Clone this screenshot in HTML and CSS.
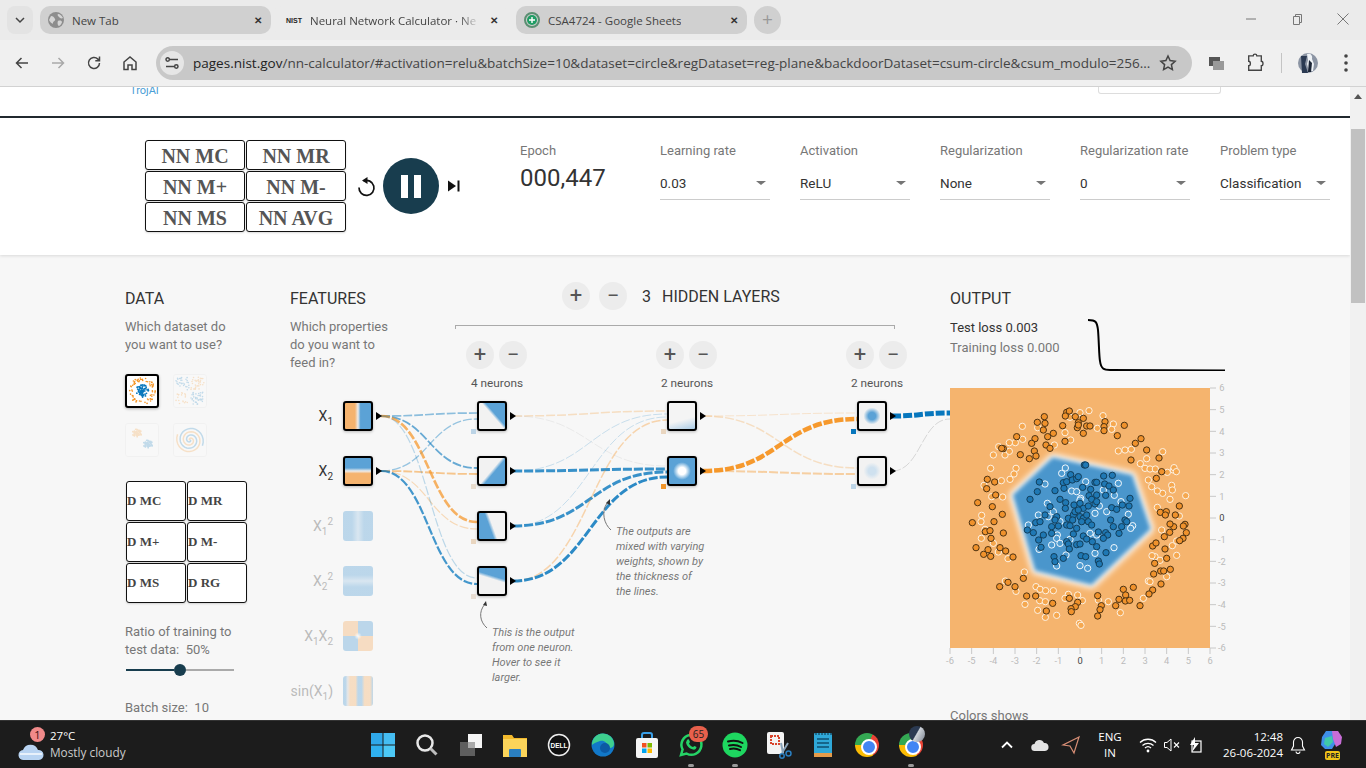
FILE: index.html
```html
<!DOCTYPE html>
<html lang="en">
<head>
    <meta charset="UTF-8">
    <title>Neural Network Calculator</title>
    <link rel="stylesheet" href="styles.css">
</head>
<body>
    <div class="tabstrip">
        <div class="tab-menu"><svg width="12" height="12" viewBox="0 0 12 12"><path class="ic-dark" d="M2 4l4 4 4-4"/></svg></div>
        <div class="tab">
            <svg width="16" height="16" viewBox="0 0 16 16"><circle cx="8" cy="8" r="8" fill="#8d8d8d"/><path d="M3 4c2 0 3 1 4 3s-2 2-2 4-3-1-4-3zM10 2c2 0 4 2 5 4-2 1-3 0-4-1s-2-2-1-3zM10 9c2-1 4 0 4 1s-2 4-3 4-2-3-1-5z" fill="#d4d4d4"/></svg>
            <span class="tab-title">New Tab</span>
            <span class="tab-close">✕</span>
        </div>
        <div class="tab tab-active">
            <span class="nist-icon">NIST</span>
            <span class="tab-title tab-fade">Neural Network Calculator · Ne</span>
            <span class="tab-close">✕</span>
        </div>
        <div class="tab tab-sheets">
            <svg width="16" height="16" viewBox="0 0 16 16"><circle cx="8" cy="8" r="7" fill="none" stroke="#5b8f72" stroke-width="2"/><circle cx="8" cy="8" r="5" fill="#1f9d64"/><path d="M8 5v6M5 8h6" stroke="#fff" stroke-width="1.4"/></svg>
            <span class="tab-title">CSA4724 - Google Sheets</span>
            <span class="tab-close">✕</span>
        </div>
        <div class="tab-new">+</div>
        <div class="window-btns">
            <svg width="14" height="14" viewBox="0 0 14 14"><path class="ic-thin" d="M2 7h10"/></svg>
            <svg width="14" height="14" viewBox="0 0 14 14"><path class="ic-thin" d="M3.500 4.500h6v8h-6zM5.500 4.500v-2h6v8h-2"/></svg>
            <svg width="14" height="14" viewBox="0 0 14 14"><path class="ic-thin" d="M1.500 1.500l11 11M12.500 1.500l-11 11"/></svg>
        </div>
    </div>

    <div class="toolbar">
        <div class="nav-btn"><svg width="16" height="16" viewBox="0 0 16 16"><path class="ic-dark" d="M14 8H2.500M7.500 3L2.500 8l5 5"/></svg></div>
        <div class="nav-btn"><svg width="16" height="16" viewBox="0 0 16 16"><path class="ic-off" d="M2 8h11.500M8.500 3l5 5-5 5"/></svg></div>
        <div class="nav-btn"><svg width="16" height="16" viewBox="0 0 16 16"><path class="ic-dark" d="M13.500 8a5.500 5.500 0 1 1-1.600-3.900L13.500 5.700M13.500 1.500v4.200H9.300"/></svg></div>
        <div class="nav-btn"><svg width="16" height="16" viewBox="0 0 16 16"><path class="ic-dark" d="M2 7l6-5 6 5v7.500H10V10H6v4.500H2z"/></svg></div>
        <div class="omnibox">
            <div class="site-icon"><svg width="14" height="14" viewBox="0 0 14 14"><path class="ic-dark" d="M5 3.500h8M1 10.500h8"/><circle class="ic-dark" cx="2.700" cy="3.500" r="1.700"/><circle class="ic-dark" cx="11.300" cy="10.500" r="1.700"/></svg></div>
            <span class="url"><span class="url-host">pages.nist.gov</span>/nn-calculator/#activation=relu&amp;batchSize=10&amp;dataset=circle&amp;regDataset=reg-plane&amp;backdoorDataset=csum-circle&amp;csum_modulo=256...</span>
            <svg class="star" width="18" height="18" viewBox="0 0 18 18"><path class="ic-dark" d="M9 2l2.100 4.600 5 .6-3.700 3.400 1 5L9 13.100l-4.400 2.500 1-5L1.900 7.200l5-.6z"/></svg>
        </div>
        <div class="tool-icons">
            <svg width="24" height="24" viewBox="0 0 24 24"><rect x="4" y="6" width="11" height="9" fill="#555"/><rect x="8" y="10" width="11" height="9" fill="#999"/></svg>
            <svg width="24" height="24" viewBox="0 0 24 24"><path class="ic-dark" d="M5 4h5c0-2.500 4-2.500 4 0h5v6c2.500 0 2.500 5 0 5v5H5v-5c2.500 0 2.500-5 0-5z" transform="translate(1.200 1.200) scale(.9)"/></svg>
            <span class="tool-divider"></span>
            <svg width="24" height="24" viewBox="0 0 24 24"><circle cx="12" cy="12" r="10" fill="#8b94a3"/><path d="M5 5h6l-2 8 3 9H6z" fill="#2b3a52"/><path d="M11 3c3-1 6 1 5 5l2 5-1 7h-4l-2-7 1-4z" fill="#eef2f6"/><path d="M13 9l3 3-1 9h-3z" fill="#1a2435"/></svg>
            <svg width="24" height="24" viewBox="0 0 24 24"><circle cx="12" cy="5" r="1.800" fill="#444"/><circle cx="12" cy="12" r="1.800" fill="#444"/><circle cx="12" cy="19" r="1.800" fill="#444"/></svg>
        </div>
    </div>

    <div class="viewport">
        <div class="page">
            <div class="site-header">
                <span class="trojai">TrojAI</span>
                <span class="search-box"></span>
            </div>

            <div class="topbar">
                <div class="nn-grid">
                    <button class="nn-btn">NN MC</button>
                    <button class="nn-btn">NN MR</button>
                    <button class="nn-btn">NN M+</button>
                    <button class="nn-btn">NN M-</button>
                    <button class="nn-btn">NN MS</button>
                    <button class="nn-btn">NN AVG</button>
                </div>
                <div class="player">
                    <svg width="24" height="24" viewBox="0 0 24 24"><path class="ic-reset" d="M8.500 7a7.500 7.500 0 1 1-4.500 6.500"/><path d="M12.500 3v7l-5.500-3.500z" fill="#111"/></svg>
                    <div class="play-btn"><span></span><span></span></div>
                    <svg width="18" height="18" viewBox="0 0 18 18"><path d="M3 3.500l8 5.500-8 5.500z" fill="#111"/><rect x="12.500" y="3.500" width="2" height="11" fill="#111"/></svg>
                </div>
                <div class="fields">
                    <div class="field">
                        <label>Epoch</label>
                        <div class="epoch">000,447</div>
                    </div>
                    <div class="field">
                        <label>Learning rate</label>
                        <div class="select">0.03</div>
                    </div>
                    <div class="field">
                        <label>Activation</label>
                        <div class="select">ReLU</div>
                    </div>
                    <div class="field">
                        <label>Regularization</label>
                        <div class="select">None</div>
                    </div>
                    <div class="field">
                        <label>Regularization rate</label>
                        <div class="select">0</div>
                    </div>
                    <div class="field">
                        <label>Problem type</label>
                        <div class="select">Classification</div>
                    </div>
                </div>
            </div>

            <div class="board">
                <svg id="links" class="links" viewBox="0 255 1350 465"></svg>

                <div class="col-data">
                    <h4>DATA</h4>
                    <p class="hint">Which dataset do<br>you want to use?</p>
                    <div class="datasets">
                        <div class="thumb thumb-on"><svg id="ds-circle" width="30" height="30" viewBox="0 0 30 30"></svg></div>
                        <div class="thumb thumb-off"><svg id="ds-xor" width="32" height="32" viewBox="0 0 32 32"></svg></div>
                        <div class="thumb thumb-off"><svg id="ds-gauss" width="32" height="32" viewBox="0 0 32 32"></svg></div>
                        <div class="thumb thumb-off"><svg id="ds-spiral" width="32" height="32" viewBox="0 0 32 32"></svg></div>
                    </div>
                    <div class="d-grid">
                        <button class="d-btn">D MC</button>
                        <button class="d-btn">D MR</button>
                        <button class="d-btn">D M+</button>
                        <button class="d-btn">D M-</button>
                        <button class="d-btn">D MS</button>
                        <button class="d-btn">D RG</button>
                    </div>
                    <p class="hint ratio">Ratio of training to<br>test data:&nbsp; 50%</p>
                    <div class="slider"><span class="slider-fill"></span><span class="slider-thumb"></span><span class="slider-rest"></span></div>
                    <p class="hint batch">Batch size:&nbsp; 10</p>
                </div>

                <div class="col-features">
                    <h4>FEATURES</h4>
                    <p class="hint">Which properties<br>do you want to<br>feed in?</p>
                    <div class="feature-list">
                        <div class="feature"><span class="f-label">X<sub>1</sub></span><div class="node node-out f-x1"></div></div>
                        <div class="feature"><span class="f-label">X<sub>2</sub></span><div class="node node-out f-x2"></div></div>
                        <div class="feature f-off"><span class="f-label">X<sub>1</sub><sup>2</sup></span><div class="node-flat f-x1x1"></div></div>
                        <div class="feature f-off"><span class="f-label">X<sub>2</sub><sup>2</sup></span><div class="node-flat f-x2x2"></div></div>
                        <div class="feature f-off"><span class="f-label">X<sub>1</sub>X<sub>2</sub></span><div class="node-flat f-x1x2"></div></div>
                        <div class="feature f-off"><span class="f-label">sin(X<sub>1</sub>)</span><div class="node-flat f-sin"></div></div>
                    </div>
                </div>

                <div class="col-hidden">
                    <div class="hidden-head">
                        <span class="round-btn">+</span>
                        <span class="round-btn">−</span>
                        <span class="layer-count">3</span>
                        <span class="layer-title">HIDDEN LAYERS</span>
                    </div>
                    <div class="bracket"></div>
                    <div class="layers">
                        <div class="layer">
                            <div class="layer-head">
                                <div class="layer-btns"><span class="round-btn">+</span><span class="round-btn">−</span></div>
                                <div class="neuron-count">4 neurons</div>
                            </div>
                            <div class="node-list">
                                <div class="node node-out h-a"><i class="weight w-blue-soft"></i></div>
                                <div class="node node-out h-b"><i class="weight w-tan"></i></div>
                                <div class="node node-out h-c"><i class="weight w-tan2"></i></div>
                                <div class="node node-out h-d"><i class="weight w-tan3"></i></div>
                            </div>
                        </div>
                        <div class="layer">
                            <div class="layer-head">
                                <div class="layer-btns"><span class="round-btn">+</span><span class="round-btn">−</span></div>
                                <div class="neuron-count">2 neurons</div>
                            </div>
                            <div class="node-list">
                                <div class="node node-out m-a"><i class="weight w-tan2"></i></div>
                                <div class="node node-out m-b"><i class="weight w-orange"></i></div>
                            </div>
                        </div>
                        <div class="layer">
                            <div class="layer-head">
                                <div class="layer-btns"><span class="round-btn">+</span><span class="round-btn">−</span></div>
                                <div class="neuron-count">2 neurons</div>
                            </div>
                            <div class="node-list">
                                <div class="node node-out l-a"><i class="weight w-blue"></i></div>
                                <div class="node node-out l-b"><i class="weight w-blue-soft"></i></div>
                            </div>
                        </div>
                    </div>
                </div>

                <div class="col-output">
                    <h4>OUTPUT</h4>
                    <div class="loss-row">
                        <div class="loss-text">
                            <div class="loss-test">Test loss 0.003</div>
                            <div class="loss-train">Training loss 0.000</div>
                        </div>
                        <svg width="137" height="54" viewBox="0 0 137 54"><path class="loss-line" d="M0 3c8 0 9 2 10 10 1 12 1 26 2 31 1 8 4 9 10 9l115 .5"/></svg>
                    </div>
                    <svg id="plot" class="plot" width="290" height="290" viewBox="30 24 870 870">
                        <rect class="plot-bg" x="30" y="24" width="780" height="780"/>
                        <polygon class="plot-glow" points="338,232 577,285 632,447 455,615 285,572 218,345"/>
                        <polygon class="plot-blue" points="338,232 577,285 632,447 455,615 285,572 218,345"/>
                    </svg>
                    <p class="hint colors">Colors shows</p>
                </div>

                <div class="note note-a">The outputs are<br>mixed with varying<br>weights, shown by<br>the thickness of<br>the lines.</div>
                <div class="note note-b">This is the output<br>from one neuron.<br>Hover to see it<br>larger.</div>
            </div>
        </div>
        <div class="scrollbar">
            <span class="scroll-up"></span>
            <span class="scroll-thumb"></span>
        </div>
    </div>

    <div class="taskbar">
        <div class="weather">
            <div class="weather-icon">
                <span class="weather-badge">1</span>
                <svg width="26" height="20" viewBox="0 0 26 20"><path d="M6 19a5 5 0 0 1-1-10 8 8 0 0 1 15 0 5 5 0 0 1 1 10z" fill="#b9d4f2"/><path d="M2 13h22" stroke="#e8f1fb" stroke-width="2"/></svg>
            </div>
            <div class="weather-text">
                <div class="temp">27°C</div>
                <div class="cond">Mostly cloudy</div>
            </div>
        </div>
        <div class="apps">
            <div class="app"><svg width="24" height="24" viewBox="0 0 24 24"><rect width="11.500" height="11.500" fill="#2fa8ea"/><rect x="12.500" width="11.500" height="11.500" fill="#45bdf2"/><rect y="12.500" width="11.500" height="11.500" fill="#2fb0ee"/><rect x="12.500" y="12.500" width="11.500" height="11.500" fill="#4cc8f5"/></svg></div>
            <div class="app"><svg width="24" height="24" viewBox="0 0 24 24"><circle cx="10" cy="10" r="7.500" fill="none" stroke="#e8e8e8" stroke-width="2.500"/><path d="M15.500 15.500l6 6" stroke="#bdbdbd" stroke-width="3"/></svg></div>
            <div class="app"><svg width="24" height="24" viewBox="0 0 24 24"><rect x="9" y="1" width="14" height="14" fill="#f4f4f4"/><rect x="1" y="9" width="15" height="14" fill="#5e5e5e"/><rect x="9" y="9" width="7" height="6" fill="#a9a9a9"/></svg></div>
            <div class="app"><svg width="24" height="24" viewBox="0 0 24 24"><path d="M0 2h9l2 3h13v19H0z" fill="#f2b92c"/><rect y="6" width="24" height="18" fill="#fbd45a"/><rect x="6" y="16" width="12" height="8" rx="1" fill="#2a7fc1"/></svg></div>
            <div class="app"><svg width="24" height="24" viewBox="0 0 24 24"><circle cx="12" cy="12" r="10.500" fill="#111" stroke="#eee" stroke-width="1.500"/><text class="dell-text" x="12" y="14.500" text-anchor="middle">DELL</text></svg></div>
            <div class="app"><svg width="24" height="24" viewBox="0 0 24 24"><circle cx="12" cy="12" r="11.500" fill="#1278c8"/><path d="M1 12a11 11 0 0 1 22-1c0 4-5 5-7 3 1-4-3-7-7-6-4 1-7 3-8 4z" fill="#3ecf8e"/><circle cx="14" cy="15" r="5" fill="#0c59a4"/></svg></div>
            <div class="app"><svg width="24" height="26" viewBox="0 0 24 26"><path d="M7 6V3a2 2 0 0 1 2-2h6a2 2 0 0 1 2 2v3" fill="none" stroke="#3aa0e8" stroke-width="2"/><rect x="1" y="6" width="22" height="20" rx="2" fill="#f5f5f5"/><rect x="7" y="11" width="4.500" height="4.500" fill="#f25022"/><rect x="12.500" y="11" width="4.500" height="4.500" fill="#7fba00"/><rect x="7" y="16.500" width="4.500" height="4.500" fill="#00a4ef"/><rect x="12.500" y="16.500" width="4.500" height="4.500" fill="#ffb900"/></svg></div>
            <div class="app app-run">
                <svg width="26" height="26" viewBox="0 0 26 26"><path d="M3 23l1.600-5.500A10 10 0 1 1 8.500 21.500z" fill="none" stroke="#25d366" stroke-width="2.500"/><path d="M9 8c1-1 2-1 2.500 1l.5 1-1 1.500c1 2 2 3 4 3.500l1.500-1 2 1c0 2-2 3-3.500 2.500-4-1-6.500-4-7-7z" fill="#25d366"/></svg>
                <span class="app-badge">65</span>
            </div>
            <div class="app app-run"><svg width="26" height="26" viewBox="0 0 26 26"><circle cx="13" cy="13" r="12.500" fill="#1ed760"/><path class="spotify-line" d="M6 9.500c5-1.500 10-1 14.500 1.500M7 13.500c4-1 8.500-.5 12 1.500M8 17c3.500-.8 7-.4 10 1.200"/></svg></div>
            <div class="app"><svg width="26" height="28" viewBox="0 0 26 28"><rect x="1" y="1" width="17" height="22" rx="2" fill="#f3f3f3"/><rect x="5" y="5" width="8" height="8" fill="none" stroke="#d9442c" stroke-width="2" stroke-dasharray="2 1"/><path d="M15 12l2 10M22 12l-6 10" stroke="#8aa3b8" stroke-width="2"/><circle cx="22.500" cy="22.500" r="2.500" fill="none" stroke="#2a7fc1" stroke-width="1.500"/><circle cx="16" cy="25" r="2.200" fill="none" stroke="#2a7fc1" stroke-width="1.500"/></svg></div>
            <div class="app"><svg width="20" height="26" viewBox="0 0 20 26"><rect x="1" y="1" width="18" height="24" rx="1" fill="#2fa8d8"/><rect x="1" y="21" width="18" height="4" fill="#e49b4a"/><path d="M4 7h12M4 11h12M4 15h12" stroke="#0f4f70" stroke-width="1.500"/><path d="M3 1v2M6 1v2M9 1v2M12 1v2M15 1v2M18 1v2" stroke="#0b3045" stroke-width="1"/></svg></div>
            <div class="app"><span class="chrome-logo"></span></div>
            <div class="app app-run"><span class="chrome-logo"></span><span class="chrome-avatar"></span></div>
        </div>
        <div class="tray">
            <div class="tray-item tray-wide"><svg width="14" height="14" viewBox="0 0 14 14"><path d="M2 9.500l5-5 5 5" fill="none" stroke="#fff" stroke-width="1.800"/></svg></div>
            <div class="tray-item tray-cloud"><svg width="18" height="14" viewBox="0 0 18 14"><path d="M4 13a3.500 3.500 0 0 1-.5-7A5 5 0 0 1 13 5a4 4 0 0 1 1 8z" fill="#e4e4e4"/></svg></div>
            <div class="tray-item tray-arrow"><svg width="20" height="20" viewBox="0 0 20 20"><path d="M18 2L2 10l7 1 4 7z" fill="none" stroke="#d88f76" stroke-width="1.200"/></svg></div>
            <div class="lang">ENG<br>IN</div>
            <div class="tray-item tray-icon"><svg width="18" height="16" viewBox="0 0 18 16"><path d="M1 5.500a11.500 11.500 0 0 1 16 0M3.500 8.500a8 8 0 0 1 11 0M6 11a4.500 4.500 0 0 1 6 0" fill="none" stroke="#fff" stroke-width="1.300"/><circle cx="9" cy="14" r="1.400" fill="#fff"/></svg></div>
            <div class="tray-item tray-icon"><svg width="18" height="16" viewBox="0 0 18 16"><path d="M1.500 5.500h2.500L8 2v12l-4-3.500H1.500z" fill="none" stroke="#fff" stroke-width="1"/><path d="M11 5.500l5 5M16 5.500l-5 5" stroke="#fff" stroke-width="1.100"/></svg></div>
            <div class="tray-item tray-icon"><svg width="18" height="18" viewBox="0 0 18 18"><rect x="5" y="5" width="9" height="11" fill="none" stroke="#fff" stroke-width="1.200"/><path d="M8 1L3 9h4l-2 7 7-9H8z" fill="#fff"/></svg></div>
            <div class="clock">12:48<br>26-06-2024</div>
            <div class="tray-item tray-bell"><svg width="16" height="18" viewBox="0 0 16 18"><path d="M8 1.500a4.500 4.500 0 0 0-4.500 4.500v4L1.500 14h13l-2-4V6A4.500 4.500 0 0 0 8 1.500zM6 15.500a2 2 0 0 0 4 0" fill="none" stroke="#fff" stroke-width="1.100"/></svg></div>
            <div class="copilot">
                <svg width="24" height="20" viewBox="0 0 24 20"><path d="M6 1h8l2 2 1 8-5 8H5l-4-4 1-8z" fill="#3f8fe8"/><path d="M12 1h6l4 6-1 7-5 3-3-8z" fill="#c86dd7"/><path d="M5 8l7-2 1 6-5 5-4-3z" fill="#3fc9a8"/></svg>
                <span class="pre-badge">PRE</span>
            </div>
        </div>
    </div>

    <script src="plot.js"></script>
</body>
</html>
```

FILE: styles.css
```css
* {
    box-sizing: border-box;
}
html, body {
    margin: 0;
    height: 768px;
    overflow: hidden;
}
body {
    width: 1366px;
    display: flex;
    flex-direction: column;
    font-family: Roboto, "Liberation Sans", sans-serif;
    color: #333;
    background-color: #f7f7f7;
}
svg {
    display: block;
    flex: none;
}
.ic-dark, .ic-off, .ic-thin {
    fill: none;
    stroke: #444;
    stroke-width: 1.500;
}
.ic-off {
    stroke: #a9a9a9;
}
.ic-thin {
    stroke: #777;
    stroke-width: 1;
}

/* browser chrome */
.tabstrip {
    height: 40px;
    flex: none;
    display: flex;
    align-items: flex-start;
    padding: 6px 0 0 7px;
    background-color: #ebebeb;
    font-family: "Open Sans", "Liberation Sans", sans-serif;
    font-size: 11.500px;
    color: #444;
}
.tab-menu {
    width: 26px;
    height: 28px;
    margin-right: 7px;
    border-radius: 8px;
    background-color: #e3e3e3;
    display: flex;
    align-items: center;
    justify-content: center;
}
.tab {
    width: 231px;
    height: 28px;
    display: flex;
    align-items: center;
    padding: 0 9px 0 8px;
    border-radius: 10px;
    background-color: #d0d0d0;
}
.tab-title {
    margin-left: 8px;
    white-space: nowrap;
    overflow: hidden;
}
.tab-close {
    margin-left: auto;
    font-size: 10px;
    font-weight: bold;
    color: #333;
}
.tab-active {
    width: 239px;
    padding: 0 12px 0 15px;
    background-color: #ebebeb;
}
.tab-fade {
    -webkit-mask-image: linear-gradient(90deg, #000 90%, rgba(0, 0, 0, 0.2));
    mask-image: linear-gradient(90deg, #000 90%, rgba(0, 0, 0, 0.2));
}
.tab-sheets {
    margin-left: 6px;
}
.nist-icon {
    width: 16px;
    font-family: "Liberation Sans", sans-serif;
    font-size: 7px;
    font-weight: bold;
    color: #222;
}
.tab-new {
    width: 27px;
    height: 28px;
    margin-left: 7px;
    border-radius: 14px;
    background-color: #d0d0d0;
    color: #999;
    font-size: 19px;
    line-height: 26px;
    text-align: center;
}
.window-btns {
    display: flex;
    gap: 32px;
    margin: 6px 16px 0 auto;
}
.toolbar {
    height: 47px;
    flex: none;
    display: flex;
    align-items: flex-start;
    padding: 6px 0 0 4px;
    background-color: #f0f0f0;
    border-bottom: 1px solid #d2d2d2;
}
.nav-btn {
    width: 36px;
    height: 34px;
    display: flex;
    align-items: center;
    justify-content: center;
}
.omnibox {
    width: 1036px;
    height: 34px;
    margin-left: 8px;
    display: flex;
    align-items: center;
    padding-left: 4px;
    border-radius: 17px;
    background-color: #c8c8c8;
    font-family: "Open Sans", "Liberation Sans", sans-serif;
    font-size: 13.520px;
    color: #444;
}
.site-icon {
    width: 24px;
    height: 24px;
    border-radius: 50%;
    background-color: #e6e6e6;
    display: flex;
    align-items: center;
    justify-content: center;
}
.url {
    margin-left: 9px;
    width: 957px;
    white-space: nowrap;
}
.url-host {
    color: #222;
}
.star {
    margin-left: 9px;
}
.tool-icons {
    display: flex;
    align-items: center;
    height: 34px;
    gap: 14px;
    margin-left: 13px;
}
.tool-divider {
    width: 1px;
    height: 20px;
    background-color: #c4c4c4;
}

/* page */
.viewport {
    height: 633px;
    flex: none;
    display: flex;
}
.page {
    width: 1350px;
    overflow: hidden;
}
.site-header {
    height: 31px;
    display: flex;
    justify-content: space-between;
    align-items: flex-start;
    padding: 0 129px 0 130px;
    background-color: #fff;
    border-bottom: 2px solid #222a30;
}
.trojai {
    margin-top: -3px;
    font-size: 11px;
    color: #4a9ed6;
}
.search-box {
    width: 123px;
    height: 7px;
    border: 1px solid #ddd;
    border-top: none;
    border-radius: 0 0 3px 3px;
}
.topbar {
    height: 137px;
    display: flex;
    align-items: flex-start;
    padding: 22px 0 0 145px;
    background-color: #fff;
    box-shadow: 0 1px 3px rgba(0, 0, 0, 0.12);
}
.nn-grid {
    display: grid;
    grid-template-columns: 100px 100px;
    grid-auto-rows: 30px;
    gap: 1px;
}
.nn-btn, .d-btn {
    padding: 0;
    background-color: #fff;
    border: 1px solid #111;
    border-radius: 3px;
    font-family: "Liberation Serif", serif;
    font-weight: bold;
    color: #555;
    box-shadow: 0 1px 2px rgba(0, 0, 0, 0.15);
}
.nn-btn {
    padding-top: 3px;
    font-size: 20px;
}
.player {
    display: flex;
    align-items: center;
    margin: 18px 0 0 9px;
}
.ic-reset {
    fill: none;
    stroke: #111;
    stroke-width: 1.700;
}
.play-btn {
    width: 56px;
    height: 56px;
    margin: 0 6px 0 4px;
    display: flex;
    justify-content: center;
    align-items: center;
    gap: 6px;
    border-radius: 50%;
    background-color: #183d4e;
}
.play-btn span {
    width: 7px;
    height: 23px;
    background-color: #fff;
}
.fields {
    display: grid;
    grid-template-columns: repeat(6, 140px);
    margin: 2px 0 0 57px;
}
.field label {
    display: block;
    font-size: 13px;
    line-height: 18px;
    color: #777;
}
.epoch {
    margin-top: 3px;
    font-size: 24px;
    line-height: 30px;
    color: #333;
}
.select {
    position: relative;
    width: 110px;
    height: 27px;
    margin-top: 13px;
    font-size: 13.500px;
    line-height: 20px;
    color: #333;
    border-bottom: 1px solid #ccc;
}
.select::after {
    content: "";
    position: absolute;
    right: 4px;
    top: 8px;
    border-left: 5px solid transparent;
    border-right: 5px solid transparent;
    border-top: 4px solid #757575;
}

/* board */
.board {
    position: relative;
    height: 465px;
    display: flex;
    padding: 27px 0 0 125px;
    overflow: hidden;
}
.links {
    position: absolute;
    left: 0;
    top: 0;
    width: 1350px;
    height: 465px;
}
h4 {
    margin: 0;
    padding-top: 2px;
    font-size: 16px;
    font-weight: 400;
    line-height: 30px;
    color: #333;
}
.hint {
    margin: 4px 0 0;
    font-size: 13px;
    line-height: 18px;
    color: #777;
}
.col-data {
    width: 165px;
    flex: none;
}
.datasets {
    display: grid;
    grid-template-columns: 34px 34px;
    grid-auto-rows: 34px;
    gap: 15px 14px;
    margin-top: 20px;
}
.thumb {
    display: flex;
    align-items: center;
    justify-content: center;
    border-radius: 3px;
    background-color: #fff;
}
.thumb-on {
    border: 2px solid #000;
    box-shadow: 0 1px 3px rgba(0, 0, 0, 0.3);
}
.thumb-off {
    opacity: 0.22;
    border: 1px solid #e0e0e0;
}
.d-grid {
    display: grid;
    grid-template-columns: 60px 60px;
    grid-auto-rows: 40px;
    gap: 1px;
    margin: 24px 0 0 1px;
}
.d-btn {
    padding-left: 0;
    text-align: left;
    font-size: 13px;
    color: #444;
    border-width: 1.500px;
}
.ratio {
    margin-top: 20px;
}
.slider {
    display: flex;
    align-items: center;
    width: 108px;
    height: 12px;
    margin: 5px 0 0 1px;
}
.slider-fill {
    width: 48px;
    height: 2px;
    background-color: #183d4e;
}
.slider-thumb {
    width: 12px;
    height: 12px;
    border-radius: 50%;
    background-color: #183d4e;
}
.slider-rest {
    flex: 1;
    height: 2px;
    background-color: #aaa;
}
.batch {
    margin-top: 23px;
}
.col-features {
    position: relative;
    width: 165px;
    flex: none;
}
.feature-list {
    display: flex;
    flex-direction: column;
    gap: 25px;
    margin-top: 29px;
}
.feature {
    display: flex;
    align-items: center;
    gap: 10px;
}
.f-label {
    width: 43px;
    flex: none;
    font-size: 14px;
    line-height: 30px;
    text-align: right;
    color: #333;
    white-space: nowrap;
}
.f-label sub, .f-label sup {
    font-size: 10px;
    line-height: 0;
}
.f-off .f-label {
    color: #bbb;
}
.node, .node-flat {
    position: relative;
    width: 30px;
    height: 30px;
    flex: none;
    border-radius: 3px;
}
.node {
    border: 2px solid #000;
    box-shadow: 0 1px 3px rgba(0, 0, 0, 0.25);
}
.node-flat {
    opacity: 0.38;
}
.node-out::after {
    content: "";
    position: absolute;
    left: 31px;
    top: 9px;
    border-top: 4px solid transparent;
    border-bottom: 4px solid transparent;
    border-left: 6px solid #000;
}
.weight {
    position: absolute;
    left: -8px;
    bottom: -5px;
    width: 5px;
    height: 5px;
}
.w-blue-soft {
    background-color: #bcd4e6;
}
.w-tan {
    background-color: #e8dccd;
}
.w-tan2 {
    background-color: #e9d6c0;
}
.w-tan3 {
    background-color: #e8ddd2;
}
.w-orange {
    background-color: #f0952a;
}
.w-blue {
    background-color: #0877bd;
}
.f-x1 {
    background: linear-gradient(90deg, #f5b36e 38%, #ececec 50%, #5ba2d6 60%);
}
.f-x2 {
    background: linear-gradient(180deg, #5ba2d6 38%, #ececec 50%, #f5b36e 60%);
}
.f-x1x1 {
    background: linear-gradient(90deg, #5ba2d6 30%, #a8cbe6 50%, #5ba2d6 70%);
}
.f-x2x2 {
    background: linear-gradient(180deg, #5ba2d6 30%, #a8cbe6 50%, #5ba2d6 70%);
}
.f-x1x2 {
    background: radial-gradient(circle, #fff 0, transparent 18%), conic-gradient(#5ba2d6 0 25%, #f5b36e 25% 50%, #5ba2d6 50% 75%, #f5b36e 75%);
}
.f-sin {
    background: linear-gradient(90deg, #5ba2d6 8%, #ccc 16%, #f5b36e 24% 42%, #5ba2d6 50% 62%, #f5b36e 72% 90%, #5ba2d6);
}
.h-a {
    background: linear-gradient(49deg, #f2f2f2 52%, #5ba2d6 60%);
}
.h-b {
    background: linear-gradient(130deg, #f2f2f2 48%, #5ba2d6 57%);
}
.h-c {
    background: linear-gradient(250deg, #f2f2f2 48%, #5ba2d6 58%);
}
.h-d {
    background: linear-gradient(17deg, #f2f2f2 56%, #5ba2d6 66%);
}
.m-a {
    background: linear-gradient(165deg, #f4f4f4 62%, #a9cbe6 100%);
}
.m-b {
    background: radial-gradient(circle, #fff 0 20%, #5ba2d6 48%);
}
.l-a {
    background: radial-gradient(circle, #5ba2d6 0 20%, #f2f2f2 46%);
}
.l-b {
    background: radial-gradient(circle, #cfe1ef 0 20%, #f2f2f2 46%);
}
.col-hidden {
    position: relative;
    width: 495px;
    flex: none;
}
.hidden-head {
    display: flex;
    align-items: center;
    gap: 9px;
    padding-left: 107px;
    height: 28px;
}
.round-btn {
    width: 28px;
    height: 28px;
    flex: none;
    border-radius: 50%;
    background-color: #ececec;
    color: #555;
    font-size: 22px;
    line-height: 28px;
    text-align: center;
}
.layer-count {
    margin-left: 6px;
    font-size: 16px;
}
.layer-title {
    margin-left: 2px;
    font-size: 16px;
}
.bracket {
    width: 440px;
    height: 4px;
    margin-top: 15px;
    border: 1px solid #aaa;
    border-bottom: none;
}
.layers {
    display: grid;
    grid-template-columns: repeat(3, 190px);
    margin-top: 12px;
}
.layer-head {
    width: 66px;
    margin-left: 11px;
}
.layer-btns {
    display: flex;
    gap: 5px;
}
.neuron-count {
    margin: 6px 0 0 -5px;
    width: 72px;
    font-size: 11.800px;
    line-height: 16px;
    text-align: center;
    color: #555;
    white-space: nowrap;
}
.node-list {
    display: flex;
    flex-direction: column;
    gap: 25px;
    margin: 10px 0 0 22px;
}
.col-output {
    position: relative;
    width: 290px;
    flex: none;
}
.loss-row {
    display: flex;
    margin-top: 3px;
}
.loss-text {
    width: 138px;
    padding-top: 1px;
    font-size: 13px;
    line-height: 20px;
}
.loss-train {
    color: #777;
}
.loss-line {
    fill: none;
    stroke: #000;
    stroke-width: 2;
}
.plot {
    margin-top: 17px;
    overflow: visible;
}
.plot-bg {
    fill: #f5b46e;
}
.plot-glow {
    fill: #fff;
    stroke: #fff;
    stroke-width: 20;
    stroke-linejoin: round;
    filter: blur(9px);
}
.plot-blue {
    fill: #4a96cc;
    filter: blur(6px);
}
.pt-o {
    fill: #f0922c;
    stroke: #4d3313;
    stroke-width: 3;
}
.pt-ow {
    fill: #f5a850;
    stroke: #fdf2e4;
    stroke-width: 3;
}
.pt-b {
    fill: #1f78b4;
    stroke: #123f5c;
    stroke-width: 3;
}
.pt-bw {
    fill: #4f9bd0;
    stroke: #f3f9fd;
    stroke-width: 3;
}
.axis-tick {
    stroke: #c8c8c8;
    stroke-width: 3;
}
.axis-label {
    font-size: 28px;
    fill: #bbb;
}
.axis-zero {
    fill: #444;
}
.colors {
    margin-top: 29px;
}
.ds-line {
    fill: none;
    stroke-width: 1.500;
}
.note {
    position: absolute;
    font-size: 11px;
    font-style: italic;
    line-height: 15px;
    color: #777;
}
.note-a {
    left: 616px;
    top: 269px;
}
.note-b {
    left: 492px;
    top: 370px;
}
.link {
    fill: none;
    stroke-dasharray: 9 2;
}
.note-curve {
    fill: none;
    stroke: #777;
    stroke-width: 1;
}
.note-head {
    fill: #333;
}

/* scrollbar */
.scrollbar {
    width: 16px;
    flex: none;
    display: flex;
    flex-direction: column;
    align-items: center;
    background-color: #f1f1f1;
}
.scroll-up {
    margin-top: 7px;
    border-left: 4px solid transparent;
    border-right: 4px solid transparent;
    border-bottom: 5px solid #555;
}
.scroll-thumb {
    width: 14px;
    height: 174px;
    margin-top: 30px;
    background-color: #c1c1c1;
}

/* taskbar */
.taskbar {
    height: 48px;
    flex: none;
    display: flex;
    align-items: center;
    background-color: #1c1c1c;
    border-top: 1px solid #333;
    font-family: "Open Sans", "Liberation Sans", sans-serif;
    font-size: 11.500px;
    color: #fff;
}
.weather {
    width: 361px;
    flex: none;
    display: flex;
    align-items: center;
    padding-left: 18px;
}
.weather-icon {
    position: relative;
    width: 26px;
    height: 32px;
    margin-right: 6px;
    padding-top: 12px;
}
.weather-badge {
    position: absolute;
    left: 12px;
    top: -2px;
    width: 15px;
    height: 15px;
    border-radius: 50%;
    background-color: #f08a8a;
    color: #3a1010;
    font-size: 11px;
    line-height: 15px;
    text-align: center;
}
.temp {
    line-height: 17px;
}
.cond {
    font-size: 11.800px;
    line-height: 17px;
    color: #ccc;
}
.weather-text {
    margin-top: -2px;
}
.apps {
    display: flex;
    flex: none;
}
.app {
    position: relative;
    width: 44px;
    height: 48px;
    display: flex;
    align-items: center;
    justify-content: center;
}
.app-run::after {
    content: "";
    position: absolute;
    left: 19px;
    bottom: 2px;
    width: 6px;
    height: 3px;
    border-radius: 2px;
    background-color: #9a9a9a;
}
.app-badge {
    position: absolute;
    left: 20px;
    top: 5px;
    width: 19px;
    height: 16px;
    border-radius: 8px;
    background-color: #e8604c;
    color: #222;
    font-size: 10px;
    line-height: 16px;
    text-align: center;
}
.dell-text {
    font-family: "Liberation Sans", sans-serif;
    font-size: 6.500px;
    font-weight: bold;
    fill: #fff;
}
.spotify-line {
    fill: none;
    stroke: #111;
    stroke-width: 2;
    stroke-linecap: round;
}
.chrome-logo {
    position: relative;
    width: 24px;
    height: 24px;
    border-radius: 50%;
    background: conic-gradient(from 30deg, #ea4335 0 33%, #fbbc04 33% 66%, #34a853 66%);
    display: block;
}
.chrome-logo::after {
    content: "";
    position: absolute;
    left: 6px;
    top: 6px;
    width: 12px;
    height: 12px;
    border-radius: 50%;
    background-color: #4285f4;
    border: 2px solid #fff;
}
.chrome-avatar {
    position: absolute;
    left: 20px;
    top: 5px;
    width: 16px;
    height: 16px;
    border-radius: 50%;
    background: linear-gradient(120deg, #2b3a52 45%, #cfd4da 50%, #7b8390);
}
.tray {
    display: flex;
    align-items: center;
    margin-left: 52px;
}
.tray-item {
    display: flex;
    align-items: center;
    justify-content: center;
}
.tray-wide {
    width: 44px;
}
.tray-cloud {
    width: 22px;
}
.tray-arrow {
    width: 40px;
}
.lang {
    width: 38px;
    margin-right: 7px;
    line-height: 16px;
    text-align: center;
}
.tray-icon {
    width: 24px;
}
.clock {
    width: 77px;
    padding-right: 2px;
    line-height: 16px;
    text-align: right;
    white-space: nowrap;
}
.tray-bell {
    width: 26px;
}
.copilot {
    position: relative;
    width: 26px;
    height: 30px;
    margin-left: 9px;
}
.pre-badge {
    position: absolute;
    left: 5px;
    bottom: 0;
    padding: 0 1px;
    border-radius: 2px;
    background-color: #f0c419;
    color: #222;
    font-size: 7px;
    font-weight: bold;
    line-height: 9px;
}
```

FILE: plot.js
```js
const SVG_NS = 'http://www.w3.org/2000/svg';

function add(parent, tag, attrs) {
    const el = document.createElementNS(SVG_NS, tag);
    for (const key in attrs) {
        el.setAttribute(key, attrs[key]);
    }
    parent.appendChild(el);
    return el;
}

// x1, y1, x2, y2, colour, width, opacity
const ORANGE = '#f59322';
const BLUE = '#0877bd';
const links = [
    // features to layer 1
    [381, 416, 477, 413, BLUE, 1.7, 0.45],
    [381, 471, 477, 419, BLUE, 1.3, 0.4],
    [381, 416, 477, 468, BLUE, 1.8, 0.6],
    [381, 471, 477, 474, ORANGE, 1.8, 0.5],
    [381, 416, 477, 522, ORANGE, 2.6, 0.7],
    [381, 471, 477, 529, ORANGE, 1.2, 0.3],
    [381, 416, 477, 578, BLUE, 1.2, 0.25],
    [381, 471, 477, 584, BLUE, 2.2, 0.75],
    // layer 1 to layer 2
    [513, 416, 667, 411, ORANGE, 1.5, 0.25],
    [513, 416, 667, 466, '#999', 1, 0.15],
    [513, 471, 667, 414, BLUE, 1, 0.2],
    [513, 471, 667, 469, BLUE, 3, 0.8],
    [513, 526, 667, 417, BLUE, 1, 0.2],
    [513, 526, 667, 472, BLUE, 3, 0.8],
    [513, 581, 667, 420, ORANGE, 1.5, 0.35],
    [513, 581, 667, 477, BLUE, 3, 0.85],
    // layer 2 to layer 3
    [703, 416, 857, 413, ORANGE, 1, 0.2],
    [703, 416, 857, 468, ORANGE, 1.5, 0.25],
    [703, 471, 857, 419, ORANGE, 4.5, 0.95],
    [703, 471, 857, 474, ORANGE, 2, 0.4],
    // layer 3 to output
    [892, 416, 950, 413, BLUE, 5, 1],
    [892, 471, 950, 419, '#999', 1, 0.35]
];

const linkSvg = document.getElementById('links');
links.forEach(function(l) {
    const mid = (l[0] + l[2]) / 2;
    add(linkSvg, 'path', {
        'class': 'link',
        d: `M${l[0]} ${l[1]}C${mid} ${l[1]} ${mid} ${l[3]} ${l[2]} ${l[3]}`,
        stroke: l[4],
        'stroke-width': l[5],
        'stroke-opacity': l[6]
    });
});

// the two hint arrows
add(linkSvg, 'path', { 'class': 'note-curve', d: 'M487 628C480 622 478 612 485 604' });
add(linkSvg, 'path', { 'class': 'note-head', d: 'M486 601l1 5-4-1z' });
add(linkSvg, 'path', { 'class': 'note-curve', d: 'M611 530C604 524 601 512 607 503' });
add(linkSvg, 'path', { 'class': 'note-head', d: 'M610 499l0 6-4-2z' });

// small dataset pictures, scattered with a fixed sequence so they stay put
let seed = 7;
function rnd() {
    seed = (seed * 16807) % 2147483647;
    return seed / 2147483647;
}

function dot(svg, x, y, r, colour) {
    add(svg, 'circle', { cx: x, cy: y, r: r, fill: colour });
}

const dsCircle = document.getElementById('ds-circle');
for (let i = 0; i < 70; i++) {
    const a = rnd() * Math.PI * 2;
    const r = 9.5 + rnd() * 4;
    dot(dsCircle, 15 + r * Math.cos(a), 15 + r * Math.sin(a), 0.8, ORANGE);
}
for (let i = 0; i < 70; i++) {
    const a = rnd() * Math.PI * 2;
    const r = rnd() * 6.5;
    dot(dsCircle, 15 + r * Math.cos(a), 15 + r * Math.sin(a), 0.9, BLUE);
}

const dsXor = document.getElementById('ds-xor');
for (let i = 0; i < 130; i++) {
    const x = 2 + rnd() * 28;
    const y = 2 + rnd() * 28;
    if (Math.abs(x - 16) > 1 && Math.abs(y - 16) > 1) {
        dot(dsXor, x, y, 0.8, (x - 16) * (y - 16) > 0 ? BLUE : ORANGE);
    }
}

const dsGauss = document.getElementById('ds-gauss');
for (let i = 0; i < 50; i++) {
    const a = rnd() * Math.PI * 2;
    const r = rnd() * 5;
    dot(dsGauss, 11 + r * Math.cos(a), 10 + r * Math.sin(a), 0.9, ORANGE);
    dot(dsGauss, 22 + r * Math.cos(a), 21 + r * Math.sin(a), 0.9, BLUE);
}

const dsSpiral = document.getElementById('ds-spiral');
[[BLUE, 0], [ORANGE, Math.PI]].forEach(function(arm) {
    let d = '';
    for (let t = 0; t <= 13; t += 0.25) {
        const r = t * 1.05;
        const x = 16 + r * Math.cos(t + arm[1]);
        const y = 16 + r * Math.sin(t + arm[1]);
        d += (t === 0 ? 'M' : 'L') + x.toFixed(1) + ' ' + y.toFixed(1);
    }
    add(dsSpiral, 'path', { 'class': 'ds-line', d: d, stroke: arm[0] });
});

// points are in 3x plot units, see the viewBox of #plot
const orangeDark = [[380,97],[388,93],[376,108],[406,110],[430,115],[313,110],[292,127],[315,130],[310,150],[340,160],[323,170],[415,128],[412,143],[415,135],[440,138],[450,138],[495,125],[492,140],[492,152],[553,136],[532,167],[430,160],[368,137],[375,184],[285,176],[275,190],[230,170],[318,195],[330,205],[283,213],[288,228],[268,236],[241,224],[190,206],[185,205],[603,176],[586,190],[620,210],[657,234],[573,240],[665,275],[649,295],[142,298],[164,306],[140,326],[167,345],[113,368],[157,380],[187,403],[162,425],[97,428],[136,455],[150,452],[153,475],[190,459],[108,503],[180,503],[197,513],[144,509],[131,523],[152,529],[219,531],[250,595],[179,620],[204,607],[225,620],[260,648],[287,648],[338,670],[319,693],[388,655],[413,667],[406,680],[393,686],[394,695],[473,647],[484,677],[480,689],[473,708],[527,677],[550,628],[557,645],[537,658],[556,663],[569,661],[580,622],[600,677],[638,630],[627,642],[663,612],[641,582],[644,550],[662,573],[671,573],[691,568],[680,535],[675,507],[638,498],[648,489],[673,470],[689,457],[701,440],[690,432],[735,433],[730,438],[739,458],[729,475],[719,482],[661,397],[679,395],[676,405],[706,405],[718,378]];
const orangeLight = [[420,98],[447,92],[489,107],[390,112],[520,132],[515,148],[472,145],[375,158],[392,180],[343,195],[247,139],[293,143],[248,178],[226,188],[208,188],[195,225],[160,225],[176,200],[208,214],[152,265],[228,265],[222,282],[210,298],[184,302],[132,316],[155,350],[188,351],[125,406],[123,425],[135,448],[124,475],[175,516],[160,490],[204,536],[253,576],[196,603],[228,634],[288,620],[300,628],[317,632],[340,632],[385,643],[413,645],[375,655],[299,662],[316,665],[255,673],[293,691],[316,712],[350,706],[427,662],[418,730],[423,736],[505,665],[541,698],[475,660],[610,655],[625,603],[630,605],[680,590],[645,530],[660,541],[636,527],[697,497],[710,526],[710,483],[665,450],[652,382],[668,340],[652,333],[635,320],[625,300],[695,316],[697,330],[690,358],[737,347],[718,408],[615,265],[601,251],[620,236],[535,213],[555,210],[574,208],[668,215],[630,267],[646,267],[682,277],[700,270],[702,263],[709,275]];
const blueLight = [[376,264],[365,280],[535,310],[315,312],[437,305],[395,333],[410,335],[422,355],[490,330],[523,346],[322,370],[295,405],[265,435],[340,395],[352,465],[350,475],[335,495],[297,508],[360,490],[378,525],[350,558],[420,557],[443,565],[522,503],[578,437],[572,445],[565,403],[500,395],[478,378],[543,365],[325,410],[420,360],[470,465],[465,400],[360,425],[450,460],[465,520],[390,478]];
const blueDark = [[433,255],[437,255],[298,306],[292,335],[270,358],[345,332],[370,308],[372,325],[380,305],[392,284],[397,300],[410,296],[415,290],[428,322],[465,307],[470,307],[452,328],[447,347],[455,358],[470,345],[497,346],[491,288],[517,286],[494,312],[507,318],[520,330],[570,355],[360,358],[377,368],[376,385],[402,375],[420,370],[430,385],[445,378],[465,372],[470,365],[515,383],[530,388],[547,375],[567,378],[330,380],[350,410],[315,405],[287,428],[300,425],[345,420],[335,440],[355,438],[262,450],[280,458],[310,465],[296,480],[303,502],[335,460],[380,435],[390,437],[400,405],[405,395],[415,390],[420,410],[430,415],[440,405],[425,425],[410,445],[400,462],[430,468],[440,477],[457,485],[470,500],[498,518],[410,494],[420,492],[380,485],[385,492],[388,507],[423,527],[437,530],[370,535],[342,530],[345,545],[475,543],[478,552],[475,456],[497,458],[503,465],[490,475],[512,420],[520,440],[545,440],[555,420],[560,425],[537,460],[445,425],[455,435],[385,415],[398,420]];

const plot = document.getElementById('plot');

function drawPoints(points, cls) {
    points.forEach(function(p) {
        add(plot, 'circle', { 'class': cls, cx: p[0], cy: p[1], r: 9.5 });
    });
}
drawPoints(orangeLight, 'pt-ow');
drawPoints(orangeDark, 'pt-o');
drawPoints(blueLight, 'pt-bw');
drawPoints(blueDark, 'pt-b');

// axes, -6 to 6 along the bottom and down the right side
for (let i = 0; i <= 12; i++) {
    const pos = 65 * i;
    const xVal = i - 6;
    const yVal = 6 - i;
    add(plot, 'line', { 'class': 'axis-tick', x1: 30 + pos, y1: 804, x2: 30 + pos, y2: 822 });
    add(plot, 'line', { 'class': 'axis-tick', x1: 810, y1: 24 + pos, x2: 828, y2: 24 + pos });
    const xText = add(plot, 'text', {
        'class': xVal === 0 ? 'axis-label axis-zero' : 'axis-label',
        x: 30 + pos, y: 851, 'text-anchor': 'middle'
    });
    xText.textContent = xVal;
    const yText = add(plot, 'text', {
        'class': yVal === 0 ? 'axis-label axis-zero' : 'axis-label',
        x: yVal < 0 ? 834 : 838, y: 34 + pos
    });
    yText.textContent = yVal;
}
```
